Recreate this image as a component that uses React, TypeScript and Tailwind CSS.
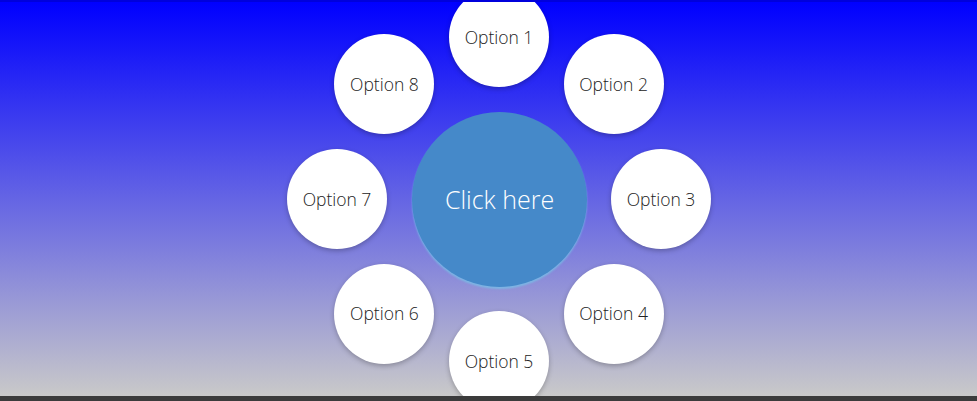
const OPTIONS = [
  'Option 1',
  'Option 2',
  'Option 3',
  'Option 4',
  'Option 5',
  'Option 6',
  'Option 7',
  'Option 8',
];

const CX = 499;
const CY = 199;
const R = 162;

export default function App() {
  return (
    <div className="w-[977px] h-[401px] overflow-hidden flex flex-col font-['Open_Sans',sans-serif]">
      <div className="relative h-[396px] overflow-hidden border-t-2 border-[#0000dc] bg-[linear-gradient(to_bottom,#0000ff,#c9c9c9)]">
        {OPTIONS.map((label, i) => {
          const angle = (i * Math.PI) / 4;
          const x = CX + R * Math.sin(angle);
          const y = CY - R * Math.cos(angle) - 2;
          return (
            <div
              key={label}
              className="absolute w-[100px] h-[100px] -ml-[50px] -mt-[50px] rounded-full bg-white shadow-[0_2px_5px_rgba(0,0,0,0.25)] flex items-center justify-center text-[17.5px] font-light text-[#222]"
              style={{ left: x, top: y }}
            >
              {label}
            </div>
          );
        })}
        <div className="absolute left-[412px] top-[110px] w-[175px] h-[175px] rounded-full bg-[#4589c9] shadow-[0_2px_2px_rgba(120,190,230,0.8)] flex items-center justify-center text-[25px] font-light text-white">
          Click here
        </div>
      </div>
      <div className="h-[5px] bg-[#3b3b3b]" />
    </div>
  );
}
